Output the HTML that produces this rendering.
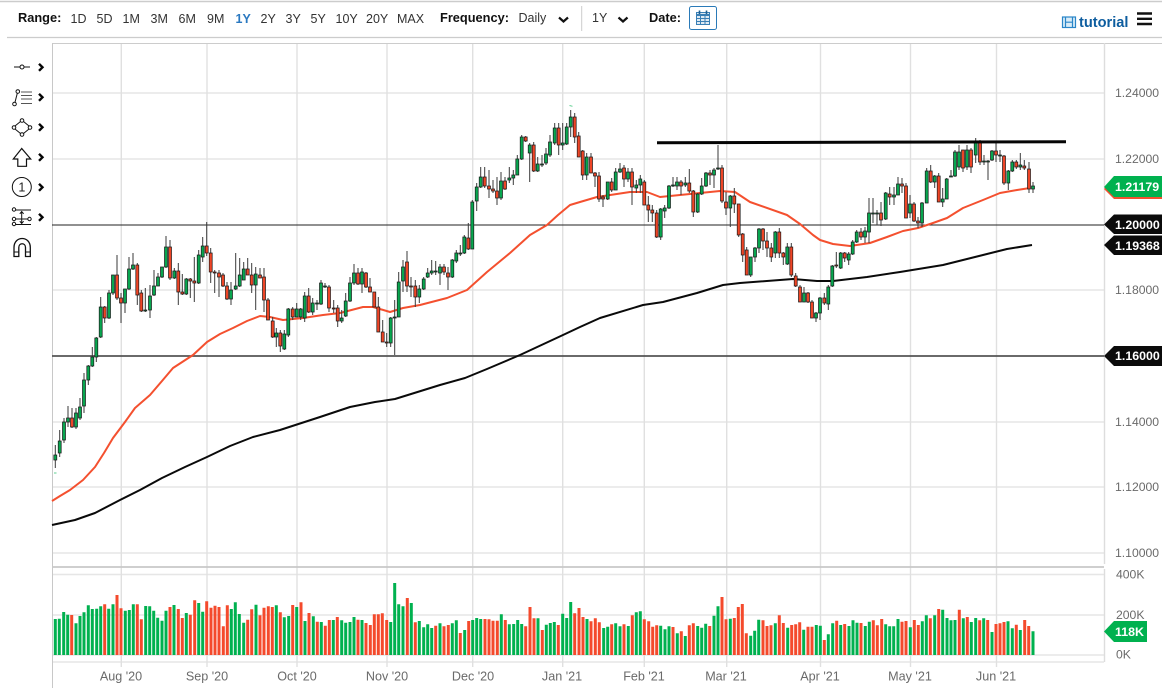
<!DOCTYPE html>
<html><head><meta charset="utf-8"><title>EUR/USD Daily Chart</title>
<style>
html,body{margin:0;padding:0;background:#fff;width:1169px;height:694px;overflow:hidden}
svg{display:block}
text{font-family:"Liberation Sans",sans-serif}
.t{font-size:12.5px;fill:#333}
.b{font-size:12.8px;font-weight:bold;fill:#111}
.a{font-size:12.2px;fill:#6a6a6a}
.x{font-size:12.6px;fill:#6a6a6a;text-anchor:middle}
.w{font-size:12.4px;font-weight:bold;fill:#fff}
</style></head>
<body>
<svg width="1169" height="694" viewBox="0 0 1169 694" xmlns="http://www.w3.org/2000/svg">
<!-- header lines -->
<path d="M0 1.5H1162" stroke="#ccc" stroke-width="1.4"/>
<path d="M7 37.5H1162" stroke="#ccc" stroke-width="1.2"/>
<!-- toolbar -->
<text class="b" x="18" y="22">Range:</text>
<text class="t" x="70.5" y="23">1D</text>
<text class="t" x="96.5" y="23">5D</text>
<text class="t" x="122.5" y="23">1M</text>
<text class="t" x="150.5" y="23">3M</text>
<text class="t" x="178.5" y="23">6M</text>
<text class="t" x="207" y="23">9M</text>
<text class="t" x="235.5" y="23" style="font-weight:bold;fill:#2a78c0">1Y</text>
<text class="t" x="260.5" y="23">2Y</text>
<text class="t" x="285.5" y="23">3Y</text>
<text class="t" x="310.5" y="23">5Y</text>
<text class="t" x="335.5" y="23">10Y</text>
<text class="t" x="366" y="23">20Y</text>
<text class="t" x="397" y="23">MAX</text>
<text class="b" x="440" y="22">Frequency:</text>
<text class="t" x="518.5" y="22">Daily</text>
<path d="M559 17.5l4.500 4 4.500-4" fill="none" stroke="#111" stroke-width="2.200"/>
<path d="M581.7 6V31" stroke="#ccc" stroke-width="1"/>
<text class="t" x="592" y="22">1Y</text>
<path d="M618.500 17.5l4.500 4 4.500-4" fill="none" stroke="#111" stroke-width="2.200"/>
<text class="b" x="649" y="22">Date:</text>
<rect x="689.5" y="6.5" width="27" height="23" rx="2" fill="#fff" stroke="#2a7ab8"/>
<g fill="none" stroke="#3a7fb5" stroke-width="1">
<rect x="696.5" y="12.5" width="13" height="12" fill="#dfeaf3"/>
<path d="M696.5 15H709.5" stroke-width="2"/>
<path d="M696.5 18.5H709.5M696.5 21.5H709.5M700.5 15V24.5M705 15V24.5"/>
<path d="M699.5 10.5V14M706.5 10.5V14" stroke-width="1.6" stroke="#1f5f90"/>
</g>
<!-- tutorial -->
<g fill="none" stroke="#2a85c8" stroke-width="1.2">
<rect x="1062.5" y="17" width="13" height="10.5" fill="#d9ecf8"/>
<path d="M1065.5 17V27.5M1072.5 17V27.5M1065.5 22.2H1072.5"/>
</g>
<text x="1079" y="27" style="font-size:14.6px;font-weight:bold;fill:#0d5d9f">tutorial</text>
<path d="M1137 13.5H1152M1137 18.8H1152M1137 24H1152" stroke="#111" stroke-width="2.4"/>

<!-- chart grid -->
<path d="M52 93H1104M52 159H1104M52 290H1104M52 422H1104M52 487H1104M52 553H1104M52 574.5H1104M52 615H1104M52 655H1104M52 662H1104" stroke="#e6e6e6" stroke-width="1.6"/>
<path d="M121.3 43V667M207 43V667M297 43V667M387 43V667M472.7 43V667M562.7 43V667M644.3 43V667M726.7 43V667M820.5 43V667M910.5 43V667M996.5 43V667" stroke="#e0e0e0" stroke-width="1.4"/>
<path d="M52 43.5H1162" stroke="#ccc" stroke-width="1"/>
<path d="M52.5 43V688" stroke="#c8c8c8" stroke-width="1"/>
<path d="M1104.5 43V564M1104.5 569V662" stroke="#ddd" stroke-width="1.400"/>
<path d="M52 567H1104" stroke="#c8c8c8" stroke-width="1.8"/>

<!-- volume -->
<path fill="none" stroke="#00b14f" stroke-width="3" d="M55.3 655V619M59.3 655V618.7M63.7 655V612M67.7 655V614.7M76 655V623.3M80 655V616M84 655V612.3M88.3 655V605.3M92.3 655V609M96.7 655V608.7M100.7 655V606.3M108.7 655V608.7M113 655V604.3M125.3 655V610.7M129.3 655V610M133.3 655V604.3M145.7 655V606M149.7 655V606.3M153.7 655V610.7M157.7 655V617.7M162 655V620.7M166 655V610.7M174 655V605M186.3 655V613M198.7 655V603M202.7 655V611.7M231.3 655V609M235.3 655V602.3M239.3 655V614M243.7 655V622.7M256 655V604.7M276.3 655V605.3M284.3 655V617.3M288.7 655V616M296.7 655V607M305 655V621M313.3 655V616.3M321.3 655V622M333.3 655V620M341.7 655V620.3M345.7 655V622.7M350 655V622M354 655V617M362 655V620M390.7 655V622M394.7 655V583M398.7 655V604.3M403 655V606.3M411.3 655V603M419.3 655V621M423.7 655V627.3M427.7 655V624.3M431.7 655V628M440 655V623.3M452.3 655V623.3M456.3 655V620.3M464.7 655V630M472.7 655V620M476.7 655V618M480.7 655V619M501.3 655V614.3M509.3 655V624.3M513.7 655V624M517.7 655V620M521.7 655V624M538 655V618.3M546.3 655V624.7M550.3 655V623M554.3 655V622M562.7 655V613.7M566.7 655V618M570.7 655V602M587 655V619M603.7 655V628M607.7 655V626.7M615.7 655V623.3M620 655V626.3M628.3 655V626M636.3 655V612.3M640.3 655V611.3M660.7 655V625.7M665 655V629.3M669 655V626.3M677.3 655V633.3M685.3 655V636M697.7 655V626M701.7 655V627.7M705.7 655V623.7M714 655V615.7M718 655V606.3M730.3 655V618.7M750.7 655V635.7M754.7 655V630.7M758.7 655V619.7M775.3 655V623.3M787.7 655V627.7M803.7 655V629.7M816.3 655V625M820.3 655V625.7M828.3 655V634.3M832.7 655V623.3M840.7 655V625M849 655V626M853 655V620.3M857 655V622.7M865.3 655V626M869.3 655V621.7M885.7 655V624.3M889.7 655V626.3M893.7 655V626.3M898 655V619M910.3 655V627.3M922.3 655V621.3M926.3 655V615.3M934.7 655V615.3M942.7 655V609.7M947 655V618M951 655V620.3M955 655V620M963.3 655V618.3M971.3 655V622M975.7 655V618M983.7 655V618.3M992 655V632M1008 655V621.3M1012.3 655V628.3M1020.3 655V630M1033 655V631.3"/>
<path fill="none" stroke="#f44a2c" stroke-width="3" d="M71.7 655V615M104.7 655V604.3M117 655V595M121 655V608.3M137.3 655V604.3M141.3 655V619.3M170 655V607M178.3 655V609M182.3 655V618M190.3 655V614.7M194.7 655V600.3M206.7 655V601.3M211 655V607.7M215 655V605.7M219 655V607M223.3 655V626.3M227.3 655V605.3M247.7 655V619.7M251.7 655V609.3M260 655V615.3M264 655V607.7M268.3 655V606.3M272.3 655V607M280.3 655V612.3M292.7 655V605M301 655V602.3M309 655V613M317.3 655V621.7M325.3 655V625.7M329.3 655V620M337.3 655V617M358 655V619.7M366 655V623M370.3 655V625M374.3 655V614.3M378.3 655V614.3M382.3 655V613.3M386.7 655V620M407.3 655V598M415.3 655V622.3M435.7 655V625.7M444 655V626.3M448.3 655V625M460.3 655V633M468.7 655V621M485 655V619M489 655V619.3M493 655V620.7M497.3 655V620.7M505.3 655V620M525.7 655V626.3M530 655V607M534 655V618.3M542.3 655V630M558.3 655V625M574.7 655V613.3M579 655V608M583 655V617M591 655V621.3M595.3 655V618.3M599.3 655V622.3M611.7 655V624.3M624 655V624.3M632.3 655V615.3M644.3 655V619.3M648.7 655V621.3M652.7 655V626.7M656.7 655V625.3M673 655V627M681.3 655V631.3M689.3 655V625.3M693.3 655V623.3M709.7 655V626M722 655V597M726 655V619.3M734.3 655V618M738.3 655V607M742.3 655V604M746.3 655V633.3M763 655V620.3M767 655V626M771 655V625.3M779.3 655V615.3M783.3 655V623M791.7 655V625M795.7 655V624.3M799.7 655V622.3M808 655V626.7M812 655V626.7M824.3 655V640M836.7 655V620.7M844.7 655V624M861 655V623M873.3 655V620.3M877.3 655V625.3M881.7 655V619M902 655V621.7M906 655V621M914.3 655V620M918.3 655V625M930.3 655V618.3M938.7 655V609M959.3 655V609.7M967.3 655V617M979.7 655V620.3M987.7 655V620M996 655V624M1000 655V623.3M1004 655V622M1016.3 655V624.7M1024.7 655V620M1028.7 655V626"/>

<!-- horizontal levels -->
<path d="M52 225H1104" stroke="#222" stroke-width="1.1"/>
<path d="M52 356H1104" stroke="#555" stroke-width="1.7"/>

<!-- moving averages -->
<polyline fill="none" stroke="#f4502f" stroke-width="2" stroke-linejoin="round" points="52,501 60,496 70,490 83,480 95,467 104,453 113,438 125,422 135,408 150,395 162,381 173,368 193,355 207,342 220,334 233,328 247,321 260,316 270,317 283,320 303,318 323,315 340,313 363,307 373,307 390,312 403,308 420,305 447,298 467,290 477,281 487,272 510,253 530,235 547,225 558,215 570,205 580,202 597,197 630,192 647,192 660,197 690,194 720,191 735,192 750,202 787,215 800,224 813,235 820,240 833,244 850,246 870,243 887,237 903,231 918,228 933,223 947,218 963,208 983,200 1000,193 1017,190 1030,188"/>
<polyline fill="none" stroke="#0a0a0a" stroke-width="2" stroke-linejoin="round" points="52,525 75,520 95,513 120,500 140,490 162,478 185,467 207,457 230,446 253,437 280,430 320,417 350,407 375,402 395,399 440,385 465,378 487,369 520,355 563,335 580,327 600,318 643,305 663,302 697,293 723,285 740,283 793,279 817,281 833,281 867,277 900,272 943,265 983,255 1007,249 1032,245"/>

<!-- wicks -->
<path fill="none" stroke="#3a3a3a" stroke-width="1" d="M55.3 445V468M59.7 430V457M64 418V443M68 406V427M72 408V428M76 408V429M80 398V420M84 373V413M88.3 365V385M92.3 347V367M96.3 337V362M100.7 297V338M104.7 306V323M109 290V319M113 275V295M117 255V300M121 293V323M125 289V313M129 257V290M133 253V270M137.3 263V305M141.3 290V312M145.3 288V312M150 285V318M154 270V296M158 273V286M162 267V278M166 236V268M170 240V280M174.3 268V279M178.3 263V305M182.3 274V295M186.3 278V295M190.3 278V298M194.3 257V302M198.7 250V284M202.7 237V262M206.7 222V256M210.7 248V283M214.7 270V293M219 270V297M223 273V287M227 282V300M231 282V305M235.7 253V290M239.7 258V287M243.7 262V280M247.7 258V275M251.7 263V293M255.7 267V310M260 268V278M264 268V312M268 298V320M272.7 317V338M276.3 328V347M280.3 330V352M284.3 330V350M288.3 308V337M292.7 307V320M296.7 303V317M300.7 308V320M304.7 292V322M308.7 288V313M312.7 298V315M317 300V310M321 280V305M325 283V288M329 285V312M333.7 300V313M337.7 305V327M341.7 310V323M345.7 293V317M350 277V302M354 264V285M358 268V285M362 268V293M366 272V288M370 278V292M374.3 292V307M378.3 297V332M382.7 320V342M386.7 333V347M390.7 317V347M394.7 300V355M398.7 272V317M403 260V292M407 251V292M411 277V297M415.3 280V307M419.3 285V303M423.7 277V290M427.7 268V278M431.7 260V275M435.7 261V275M440 264V285M444 264V275M448 267V290M452.3 259V278M456.3 250V263M460.3 245V256M464.3 235V254M468.3 223V250M472.3 200V249M476.7 183V211M480.7 167V188M484.7 167V188M489 170V198M493 180V193M497 177V205M501 172V200M505 177V190M509.3 167V183M513.3 170V185M517.3 155V175M521.7 135V160M525.7 136V142M529.7 143V182M533.7 142V172M537.7 157V172M542 155V167M546 148V165M550 135V157M554.7 123V145M558.7 123V155M562.7 123V150M566.7 123V145M570.7 110V137M574.7 113V143M578.7 132V157M582.7 150V180M586.7 153V180M591 153V173M595 172V187M599 172V202M603 195V207M607.7 182V200M611.7 178V192M615.7 168V190M620 163V173M624 165V187M628 168V182M632 168V205M636.3 180V193M640.3 175V193M644.3 180V205M648.3 196V222M652.3 205V222M656.7 210V238M660.7 208V240M664.7 205V218M669 185V209M673 177V187M677 177V190M681 180V195M685.3 177V187M689.3 169V193M693.3 190V217M697.7 193V213M701.7 178V195M706 172V187M710 170V185M714 168V188M718 145V170M722 165V203M726 192V215M730.3 195V227M734.3 188V213M738.7 204V237M742.7 233V262M746.7 247V275M750.7 257V277M755 247V262M759 228V253M763 228V250M767 232V257M771.3 243V262M775.3 231V258M779.3 228V258M783.3 252V265M787.3 243V265M791.3 243V277M795.7 273V287M800 285V302M804 287V302M808 292V303M812 300V318M816 312V322M820 297V320M824.3 293V305M828.3 285V310M832.3 265V287M836.3 252V268M840.7 252V269M844.7 252V262M848.7 252V265M852.7 240V255M856.7 230V243M861 228V240M865 227V243M869 198V243M873 198V223M877 210V225M881 202V226M885.7 192V220M889.7 187V205M894 187V205M898 177V195M902 178V193M906 183V218M910 195V218M914 202V222M918 217V228M922 202V227M926.7 168V203M930.7 165V183M934.7 175V188M938.7 173V202M942.7 188V207M946.7 178V199M951 170V177M955 150V177M959 145V170M963 150V172M967 145V170M971 148V173M975.7 138V163M980 140V165M984 155V165M988 160V180M992 150V161M996 142V162M1000 150V162M1004 155V185M1008.3 170V190M1012.3 160V172M1016.3 160V169M1020.3 153V170M1024.3 160V170M1029 162V193M1033 182V193"/>
<!-- green bodies -->
<path fill="#08a64f" stroke="#1a1a1a" stroke-width=".7" d="M55.3 455h1.5V460h-3V455zM59.7 441h1.5V453h-3V441zM64 422h1.5V440h-3V422zM68 418h1.5V422h-3V418zM76 413h1.5V427h-3V413zM80 407h1.5V418h-3V407zM84 380h1.5V406h-3V380zM88.3 366h1.5V380h-3V366zM92.3 357h1.5V366h-3V357zM96.3 338h1.5V357h-3V338zM100.7 307h1.5V337h-3V307zM109 293h1.5V318h-3V293zM113 275h1.5V293h-3V275zM125 289h1.5V303h-3V289zM129 269h1.5V289h-3V269zM133 265h1.5V269h-3V265zM145.3 310h1.5V311h-3V310zM150 296h1.5V310h-3V296zM154 286h1.5V295h-3V286zM158 277h1.5V286h-3V277zM162 267h1.5V277h-3V267zM166 247h1.5V267h-3V247zM174.3 271h1.5V278h-3V271zM186.3 279h1.5V294h-3V279zM198.7 255h1.5V283h-3V255zM202.7 246h1.5V257h-3V246zM231 290h1.5V299h-3V290zM235.7 286h1.5V289h-3V286zM239.7 275h1.5V286h-3V275zM243.7 269h1.5V280h-3V269zM255.7 274h1.5V285h-3V274zM276.3 333h1.5V337h-3V333zM284.3 334h1.5V349h-3V334zM288.3 309h1.5V335h-3V309zM296.7 309h1.5V317h-3V309zM300.7 309h1.5V317h-3V309zM304.7 296h1.5V318h-3V296zM312.7 303h1.5V312h-3V303zM317 303h1.5V304h-3V303zM321 283h1.5V304h-3V283zM325 286h1.5V287h-3V286zM341.7 318h1.5V321h-3V318zM345.7 301h1.5V316h-3V301zM350 283h1.5V301h-3V283zM354 273h1.5V283h-3V273zM362 272h1.5V284h-3V272zM390.7 318h1.5V343h-3V318zM394.7 317h1.5V318h-3V317zM398.7 282h1.5V317h-3V282zM403 267h1.5V281h-3V267zM419.3 289h1.5V297h-3V289zM423.7 279h1.5V289h-3V279zM427.7 273h1.5V277h-3V273zM431.7 271h1.5V273h-3V271zM435.7 271h1.5V272h-3V271zM440 267h1.5V273h-3V267zM452.3 260h1.5V277h-3V260zM456.3 253h1.5V261h-3V253zM460.3 253h1.5V254h-3V253zM464.3 237h1.5V253h-3V237zM472.3 202h1.5V249h-3V202zM476.7 187h1.5V201h-3V187zM480.7 177h1.5V187h-3V177zM501 181h1.5V198h-3V181zM509.3 178h1.5V180h-3V178zM513.3 175h1.5V178h-3V175zM517.3 159h1.5V175h-3V159zM521.7 137h1.5V159h-3V137zM529.7 145h1.5V153h-3V145zM537.7 164h1.5V171h-3V164zM542 164h1.5V165h-3V164zM546 154h1.5V163h-3V154zM550 142h1.5V155h-3V142zM554.7 128h1.5V143h-3V128zM562.7 143h1.5V145h-3V143zM566.7 127h1.5V144h-3V127zM570.7 117h1.5V127h-3V117zM586.7 157h1.5V175h-3V157zM607.7 182h1.5V199h-3V182zM615.7 172h1.5V190h-3V172zM620 169h1.5V172h-3V169zM628 172h1.5V179h-3V172zM636.3 185h1.5V188h-3V185zM640.3 179h1.5V185h-3V179zM660.7 209h1.5V237h-3V209zM664.7 208h1.5V211h-3V208zM669 186h1.5V208h-3V186zM673 185h1.5V186h-3V185zM677 182h1.5V186h-3V182zM685.3 183h1.5V185h-3V183zM697.7 194h1.5V212h-3V194zM701.7 186h1.5V194h-3V186zM706 173h1.5V186h-3V173zM714 170h1.5V175h-3V170zM718 168h1.5V169h-3V168zM730.3 196h1.5V208h-3V196zM750.7 257h1.5V275h-3V257zM755 248h1.5V257h-3V248zM759 229h1.5V248h-3V229zM775.3 232h1.5V253h-3V232zM787.3 247h1.5V264h-3V247zM804 293h1.5V302h-3V293zM816 313h1.5V318h-3V313zM820 298h1.5V313h-3V298zM828.3 287h1.5V304h-3V287zM832.3 266h1.5V286h-3V266zM840.7 253h1.5V268h-3V253zM848.7 254h1.5V260h-3V254zM852.7 242h1.5V254h-3V242zM856.7 232h1.5V242h-3V232zM865 231h1.5V237h-3V231zM869 213h1.5V232h-3V213zM873 213h1.5V214h-3V213zM877 213h1.5V214h-3V213zM885.7 193h1.5V219h-3V193zM894 195h1.5V197h-3V195zM898 184h1.5V195h-3V184zM910 204h1.5V213h-3V204zM922 203h1.5V223h-3V203zM926.7 171h1.5V203h-3V171zM934.7 176h1.5V182h-3V176zM942.7 199h1.5V202h-3V199zM946.7 179h1.5V199h-3V179zM951 176h1.5V177h-3V176zM955 152h1.5V176h-3V152zM959 152h1.5V167h-3V152zM967 150h1.5V167h-3V150zM975.7 142h1.5V155h-3V142zM984 161h1.5V162h-3V161zM988 161h1.5V162h-3V161zM992 151h1.5V160h-3V151zM1000 155h1.5V156h-3V155zM1008.3 171h1.5V183h-3V171zM1012.3 162h1.5V171h-3V162zM1020.3 165h1.5V167h-3V165zM1033 186h1.5V189h-3V186z"/>
<!-- red bodies -->
<path fill="#ee4526" stroke="#1a1a1a" stroke-width=".7" d="M72 418h1.5V427h-3V418zM104.7 307h1.5V318h-3V307zM117 275h1.5V298h-3V275zM121 298h1.5V303h-3V298zM137.3 265h1.5V295h-3V265zM141.3 293h1.5V311h-3V293zM170 247h1.5V278h-3V247zM178.3 271h1.5V292h-3V271zM182.3 292h1.5V294h-3V292zM190.3 279h1.5V281h-3V279zM194.3 281h1.5V283h-3V281zM206.7 246h1.5V253h-3V246zM210.7 253h1.5V272h-3V253zM214.7 272h1.5V273h-3V272zM219 273h1.5V277h-3V273zM223 275h1.5V286h-3V275zM227 286h1.5V299h-3V286zM247.7 269h1.5V275h-3V269zM251.7 275h1.5V285h-3V275zM260 275h1.5V278h-3V275zM264 277h1.5V300h-3V277zM268 300h1.5V320h-3V300zM272.7 321h1.5V337h-3V321zM280.3 333h1.5V346h-3V333zM292.7 309h1.5V317h-3V309zM308.7 296h1.5V312h-3V296zM329 287h1.5V308h-3V287zM333.7 308h1.5V309h-3V308zM337.7 308h1.5V321h-3V308zM358 273h1.5V284h-3V273zM366 273h1.5V287h-3V273zM370 287h1.5V292h-3V287zM374.3 292h1.5V307h-3V292zM378.3 307h1.5V332h-3V307zM382.7 332h1.5V342h-3V332zM386.7 342h1.5V343h-3V342zM407 262h1.5V286h-3V262zM411 286h1.5V287h-3V286zM415.3 286h1.5V297h-3V286zM444 267h1.5V272h-3V267zM448 273h1.5V277h-3V273zM468.3 238h1.5V249h-3V238zM484.7 177h1.5V186h-3V177zM489 186h1.5V189h-3V186zM493 189h1.5V191h-3V189zM497 191h1.5V198h-3V191zM505 181h1.5V189h-3V181zM525.7 137h1.5V141h-3V137zM533.7 145h1.5V171h-3V145zM558.7 128h1.5V145h-3V128zM574.7 117h1.5V137h-3V117zM578.7 136h1.5V157h-3V136zM582.7 151h1.5V175h-3V151zM591 157h1.5V173h-3V157zM595 173h1.5V176h-3V173zM599 176h1.5V199h-3V176zM603 197h1.5V199h-3V197zM611.7 182h1.5V190h-3V182zM624 168h1.5V179h-3V168zM632 172h1.5V187h-3V172zM644.3 182h1.5V205h-3V182zM648.3 205h1.5V210h-3V205zM652.3 210h1.5V213h-3V210zM656.7 213h1.5V237h-3V213zM681 182h1.5V186h-3V182zM689.3 183h1.5V191h-3V183zM693.3 191h1.5V212h-3V191zM710 173h1.5V175h-3V173zM722 168h1.5V201h-3V168zM726 202h1.5V208h-3V202zM734.3 196h1.5V204h-3V196zM738.7 204h1.5V235h-3V204zM742.7 234h1.5V255h-3V234zM746.7 250h1.5V275h-3V250zM763 229h1.5V241h-3V229zM767 241h1.5V248h-3V241zM771.3 248h1.5V257h-3V248zM779.3 232h1.5V253h-3V232zM783.3 253h1.5V257h-3V253zM791.3 247h1.5V275h-3V247zM795.7 276h1.5V286h-3V276zM800 287h1.5V302h-3V287zM808 293h1.5V302h-3V293zM812 302h1.5V318h-3V302zM824.3 298h1.5V303h-3V298zM836.3 265h1.5V266h-3V265zM844.7 253h1.5V258h-3V253zM861 232h1.5V237h-3V232zM881 213h1.5V220h-3V213zM889.7 194h1.5V197h-3V194zM902 184h1.5V186h-3V184zM906 186h1.5V218h-3V186zM914 204h1.5V221h-3V204zM918 221h1.5V223h-3V221zM930.7 171h1.5V182h-3V171zM938.7 176h1.5V202h-3V176zM963 150h1.5V168h-3V150zM971 150h1.5V167h-3V150zM980 142h1.5V162h-3V142zM996 151h1.5V155h-3V151zM1004 156h1.5V183h-3V156zM1016.3 162h1.5V167h-3V162zM1024.3 166h1.5V168h-3V166zM1029 169h1.5V189h-3V169z"/>
<path d="M569.5 105.5l3 .8M54 473h2.5" stroke="#5fcf90" stroke-width="1"/>
<!-- trend line -->
<path d="M657 142.7L1066 141.7" stroke="#050505" stroke-width="3"/>

<!-- axis labels -->
<text class="a" x="1115" y="97">1.24000</text>
<text class="a" x="1115" y="163">1.22000</text>
<text class="a" x="1115" y="294">1.18000</text>
<text class="a" x="1115" y="426">1.14000</text>
<text class="a" x="1115" y="491">1.12000</text>
<text class="a" x="1115" y="557">1.10000</text>
<text class="a" x="1116" y="578.5">400K</text>
<text class="a" x="1116" y="619">200K</text>
<text class="a" x="1116" y="658.7">0K</text>
<!-- tags -->
<path d="M1114 178H1162V199H1114L1104 189z" fill="#f4502f"/>
<path d="M1114 176H1162V197H1114L1104 187z" fill="#00b14f"/>
<text class="w" x="1115" y="191">1.21179</text>
<path d="M1114 214.5H1162V234H1114L1104 224.5z" fill="#0b0b0b"/>
<text class="w" x="1115" y="229">1.20000</text>
<path d="M1114 235.5H1162V255H1114L1104 245z" fill="#0b0b0b"/>
<text class="w" x="1115" y="250">1.19368</text>
<path d="M1114 346H1162V366H1114L1104 356z" fill="#0b0b0b"/>
<text class="w" x="1115" y="360">1.16000</text>
<path d="M1114 621H1147V642H1114L1104 631.5z" fill="#00b14f"/>
<text class="w" x="1115" y="636">118K</text>
<!-- x axis labels -->
<text class="x" x="121" y="680.5">Aug '20</text>
<text class="x" x="207" y="680.5">Sep '20</text>
<text class="x" x="297" y="680.5">Oct '20</text>
<text class="x" x="387" y="680.5">Nov '20</text>
<text class="x" x="473" y="680.5">Dec '20</text>
<text class="x" x="562" y="680.5">Jan '21</text>
<text class="x" x="644" y="680.5">Feb '21</text>
<text class="x" x="726" y="680.5">Mar '21</text>
<text class="x" x="820" y="680.5">Apr '21</text>
<text class="x" x="910" y="680.5">May '21</text>
<text class="x" x="996" y="680.5">Jun '21</text>

<!-- left tool icons -->
<g fill="none" stroke="#111" stroke-width="1">
<path d="M14 67H20M24 67H30"/><circle cx="22" cy="67" r="2"/>
<circle cx="14.5" cy="104" r="1.8"/><circle cx="17.8" cy="91.5" r="1.8"/><path d="M15 102.3L17.3 93.3"/>
<path d="M21 92H32M21 95.5H32M21 99H32M21 103.5H32" stroke="#555"/>
<circle cx="22" cy="120.5" r="1.8"/><circle cx="14" cy="127.5" r="1.8"/><circle cx="30" cy="127.5" r="1.8"/><circle cx="22" cy="134.5" r="1.8"/>
<path d="M20.5 121.5L15 126M23.5 121.5L29 126M15 129L20.5 133.5M29 129L23.5 133.5"/>
<path d="M21.7 148.5L13.3 159H17.8V166.3H26.5V159H30.7z" stroke-width="1.2"/>
<circle cx="21.8" cy="187" r="9.5"/>
<circle cx="14" cy="209.5" r="1.7"/><circle cx="14" cy="219" r="1.7"/><circle cx="14" cy="224" r="1.7"/><circle cx="29.5" cy="219" r="1.7"/>
<path d="M16 210H31M16 219H27.5M16 224.5H31"/>
<path d="M21.7 212V223M19.8 213.8L21.7 211.5L23.6 213.8M19.8 221.2L21.7 223.5L23.6 221.2"/>
<path d="M14 256.5V247.5C14 235.500 30.3 235.500 30.3 247.5V256.5H25.5V247.5C25.5 242.5 18.8 242.5 18.8 247.5V256.5z" stroke-width="1.3"/>
<path d="M14 252H18.8M25.500 252H30.3" stroke-width="1.1"/>
</g>
<text x="21.8" y="191.5" text-anchor="middle" style="font-size:12.5px;fill:#222">1</text>
<path d="M39 63.800l3.500 3.500-3.500 3.500M39 93.800l3.500 3.500-3.500 3.500M39 123.800l3.500 3.500-3.500 3.500M39 153.800l3.500 3.500-3.500 3.500M39 183.800l3.500 3.500-3.500 3.500M39 213.800l3.500 3.500-3.500 3.500" fill="none" stroke="#050505" stroke-width="2.400"/>
</svg>
</body></html>
